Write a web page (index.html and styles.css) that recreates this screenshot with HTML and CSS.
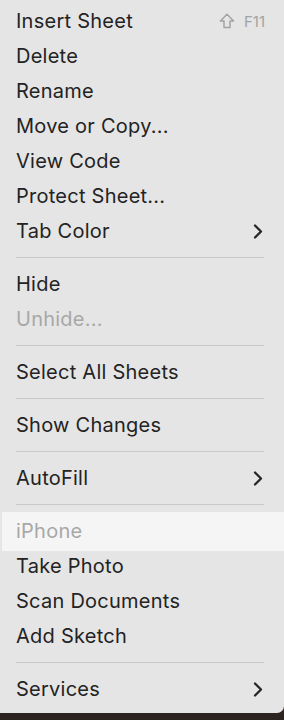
FILE: index.html
```html
<!DOCTYPE html>
<html>
<head>
<meta charset="utf-8">
<link rel="stylesheet" href="styles.css">
</head>
<body>
<div class="menu">
  <div class="item"><span class="label">Insert Sheet</span><span class="shortcut"><svg class="shift" width="16" height="16" viewBox="0 0 16 16"><path d="M8 1.3 L14.6 8 H11 V14.6 H5 V8 H1.4 Z" fill="none" stroke="#a3a3a3" stroke-width="1.5" stroke-linejoin="round"/></svg>F11</span></div>
  <div class="item"><span class="label">Delete</span></div>
  <div class="item"><span class="label">Rename</span></div>
  <div class="item"><span class="label">Move or Copy...</span></div>
  <div class="item"><span class="label">View Code</span></div>
  <div class="item"><span class="label">Protect Sheet...</span></div>
  <div class="item"><span class="label">Tab Color</span><svg class="chev" width="10" height="15" viewBox="0 0 10 15"><path d="M2 1.5 L8 7.5 L2 13.5" fill="none" stroke="#262626" stroke-width="2.3" stroke-linecap="round" stroke-linejoin="round"/></svg></div>
  <div class="sep"></div>
  <div class="item"><span class="label">Hide</span></div>
  <div class="item disabled"><span class="label">Unhide...</span></div>
  <div class="sep"></div>
  <div class="item"><span class="label">Select All Sheets</span></div>
  <div class="sep"></div>
  <div class="item"><span class="label">Show Changes</span></div>
  <div class="sep"></div>
  <div class="item"><span class="label">AutoFill</span><svg class="chev" width="10" height="15" viewBox="0 0 10 15"><path d="M2 1.5 L8 7.5 L2 13.5" fill="none" stroke="#262626" stroke-width="2.3" stroke-linecap="round" stroke-linejoin="round"/></svg></div>
  <div class="sep"></div>
  <div class="item header"><span class="label">iPhone</span></div>
  <div class="item"><span class="label">Take Photo</span></div>
  <div class="item"><span class="label">Scan Documents</span></div>
  <div class="item"><span class="label">Add Sketch</span></div>
  <div class="sep"></div>
  <div class="item"><span class="label">Services</span><svg class="chev" width="10" height="15" viewBox="0 0 10 15"><path d="M2 1.5 L8 7.5 L2 13.5" fill="none" stroke="#262626" stroke-width="2.3" stroke-linecap="round" stroke-linejoin="round"/></svg></div>
</div>
</body>
</html>
```
FILE: styles.css
```css
html, body {
  margin: 0;
  padding: 0;
  background: #2b2320;
}
body {
  width: 284px;
  height: 720px;
  overflow: hidden;
  font-family: Inter, "Liberation Sans", sans-serif;
}
.menu {
  background: #e5e5e5;
  height: 713px;
  box-sizing: border-box;
  padding: 3.5px 0 0 0;
  border-bottom-right-radius: 7px;
  display: flex;
  flex-direction: column;
}
.item {
  height: 35px;
  display: flex;
  align-items: center;
  padding: 0 20px 0 16px;
  color: #232323;
  font-size: 20px;
  letter-spacing: 0.25px;
  flex-shrink: 0;
}
.label {
  flex: 1;
  white-space: nowrap;
}
.disabled {
  color: #a8a8a8;
}
.header {
  color: #a8a8a8;
  background: #f5f5f5;
  height: 39px;
  margin: -2px 0 -2px 2px;
  padding-left: 14px;
}
.sep {
  height: 18px;
  flex-shrink: 0;
  display: flex;
  align-items: center;
  padding: 0 20px 0 16px;
}
.sep::before {
  content: "";
  display: block;
  flex: 1;
  height: 1px;
  background: #c9c9c9;
}
.shortcut {
  display: flex;
  align-items: center;
  gap: 9px;
  color: #a3a3a3;
  font-size: 15px;
  letter-spacing: 0;
  margin-right: -1px;
}
.chev {
  margin-right: 1px;
}
```
